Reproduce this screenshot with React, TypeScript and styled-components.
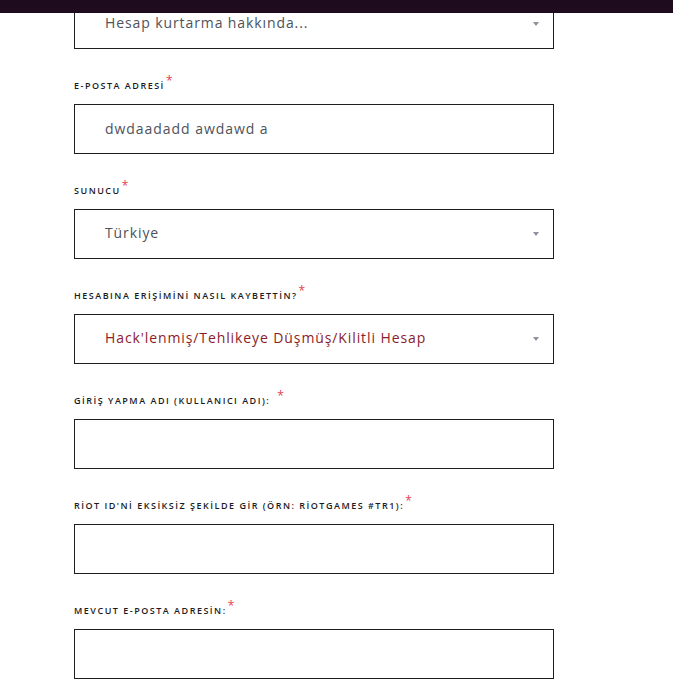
import React from "react";
import styled, { createGlobalStyle } from "styled-components";

const Global = createGlobalStyle`
  html, body { margin: 0; padding: 0; background: #ffffff; }
  body { font-family: "Open Sans", "Liberation Sans", sans-serif; overflow: hidden; }
  * { box-sizing: border-box; }
`;

const TopBar = styled.header`
  position: fixed;
  top: 0;
  left: 0;
  right: 0;
  height: 13px;
  background: #1e0b1d;
  z-index: 10;
`;

const Form = styled.form`
  display: flex;
  flex-direction: column;
  width: 480px;
  margin: -1px 0 0 74px;
`;

const Field = styled.div`
  display: flex;
  flex-direction: column;
  margin-bottom: 26px;
`;

const Label = styled.label`
  display: flex;
  align-items: center;
  height: 20px;
  margin-bottom: 9px;
  font-family: "Open Sans", sans-serif;
  font-size: 9px;
  font-weight: 600;
  letter-spacing: 1.5px;
  color: #1b1b1f;
  text-transform: uppercase;
  white-space: nowrap;
`;

const Star = styled.span<{ $gap?: boolean }>`
  color: #e2424f;
  font-size: 12px;
  font-weight: 400;
  letter-spacing: 0;
  margin-left: ${(p) => (p.$gap ? "7px" : "1px")};
  position: relative;
  top: -5px;
`;

const Box = styled.div`
  display: flex;
  align-items: center;
  justify-content: space-between;
  height: 50px;
  border: 1px solid #1e1e22;
  background: #fff;
  padding: 0 14px 3px 30px;
`;

const TextInput = styled.input`
  height: 50px;
  width: 100%;
  border: 1px solid #1e1e22;
  background: #fff;
  padding: 0 14px 1px 30px;
  font-family: "Open Sans", sans-serif;
  font-size: 14px;
  letter-spacing: 0.95px;
  color: #4d525b;
  outline: none;
  border-radius: 0;
`;

const Value = styled.span<{ $accent?: boolean }>`
  font-family: "Open Sans", sans-serif;
  font-size: 14px;
  letter-spacing: 0.9px;
  color: ${(p) => (p.$accent ? "#8a1c2b" : "#4d525b")};
  white-space: nowrap;
`;

const Caret = styled.span`
  width: 0;
  height: 0;
  border-left: 3px solid transparent;
  border-right: 3px solid transparent;
  border-top: 4px solid #8d929b;
  margin-top: 2px;
`;

const SelectField = ({ value, accent }: { value: string; accent?: boolean }) => (
  <Box>
    <Value $accent={accent}>{value}</Value>
    <Caret />
  </Box>
);

export default function App() {
  return (
    <>
      <Global />
      <TopBar />
      <Form>
        <Field>
          <SelectField value="Hesap kurtarma hakkında..." />
        </Field>
        <Field>
          <Label>
            E-posta adresİ<Star>*</Star>
          </Label>
          <TextInput defaultValue="dwdaadadd awdawd a" />
        </Field>
        <Field>
          <Label>
            Sunucu<Star>*</Star>
          </Label>
          <SelectField value="Türkiye" />
        </Field>
        <Field>
          <Label>
            Hesabına erİşİmİnİ nasıl kaybettİn?<Star>*</Star>
          </Label>
          <SelectField value="Hack'lenmiş/Tehlikeye Düşmüş/Kilitli Hesap" accent />
        </Field>
        <Field>
          <Label>
            GİRİŞ YAPMA ADI (KULLANICI ADI):<Star $gap>*</Star>
          </Label>
          <TextInput />
        </Field>
        <Field>
          <Label>
            RİOT ID'Nİ EKSİKSİZ ŞEKİLDE GİR (ÖRN: RİOTGAMES #TR1):<Star>*</Star>
          </Label>
          <TextInput />
        </Field>
        <Field>
          <Label>
            MEVCUT E-POSTA ADRESİN:<Star>*</Star>
          </Label>
          <TextInput />
        </Field>
      </Form>
    </>
  );
}
